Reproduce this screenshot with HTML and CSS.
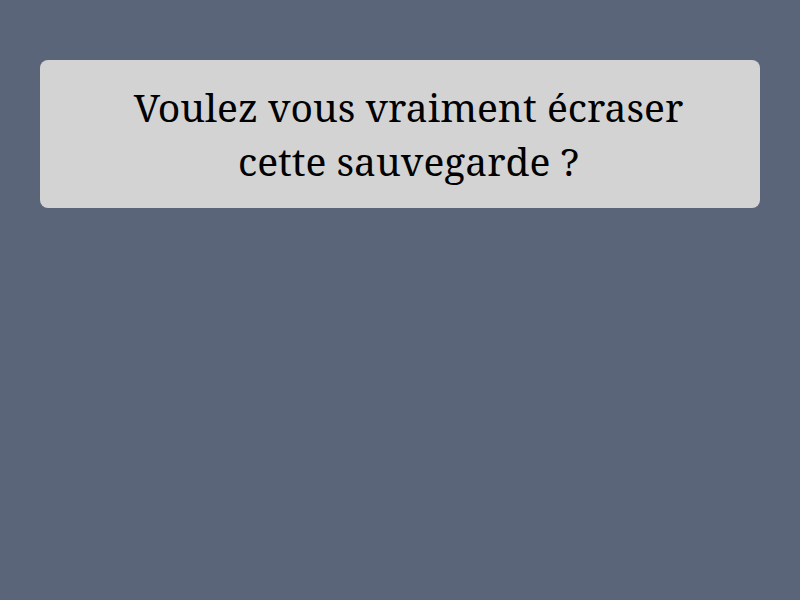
FILE: index.html
```html
<!DOCTYPE html>
<html>
<head>
<meta charset="utf-8">
<link rel="stylesheet" href="styles.css">
</head>
<body>
<div class="dialog">
  <p class="message">Voulez vous vraiment écraser cette sauvegarde ?</p>
</div>
</body>
</html>
```
FILE: styles.css
```css
html, body {
  margin: 0;
  background: #5a6579;
  width: 800px;
  height: 600px;
}
body {
  padding: 60px 40px 0;
  box-sizing: border-box;
}
.dialog {
  background: #d3d3d3;
  border-radius: 8px;
  padding: 20px 48px 20px 65px;
}
.message {
  margin: 0;
  font-family: "Noto Serif", "DejaVu Serif", serif;
  font-weight: 400;
  font-size: 39px;
  line-height: 54px;
  text-align: center;
  color: #000;
}
```
